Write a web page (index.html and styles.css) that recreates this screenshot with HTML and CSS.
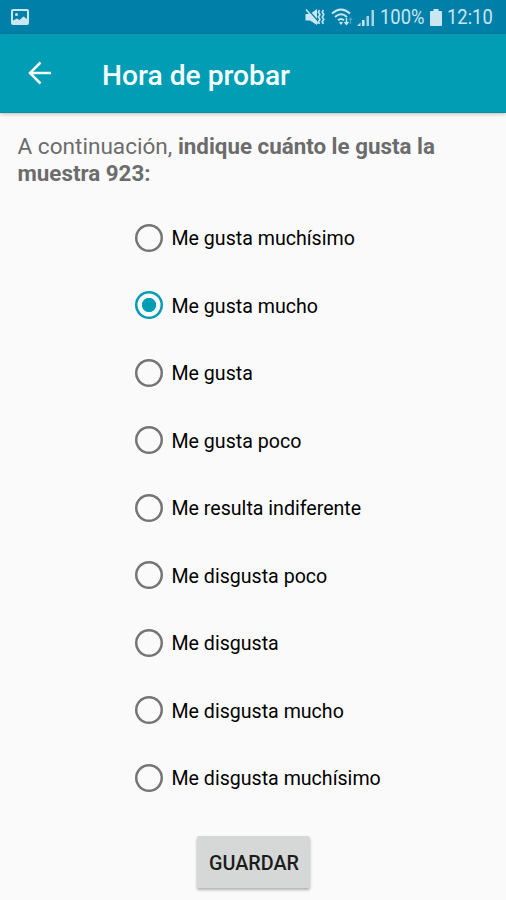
FILE: index.html
```html
<!DOCTYPE html>
<html lang="es">
<head>
  <meta charset="UTF-8"/>
  <meta name="viewport" content="width=device-width, initial-scale=1.0"/>
  <title>Hora de probar</title>
  <link rel="stylesheet" href="styles.css">
</head>
<body>
  <div class="status">
    <svg class="ic-foto" width="18" height="16" viewBox="0 0 18 16">
      <rect x="1" y="1" width="16" height="14" rx="1" fill="none" stroke="#c9e6f1" stroke-width="2"/>
      <circle cx="5.5" cy="5.5" r="1.5" fill="#c9e6f1"/>
      <path d="M2 14V11.500L6 9.500L8.500 11L12.500 7.500L16 10V14Z" fill="#c9e6f1"/>
    </svg>
    <svg class="ic-mute" width="20" height="18" viewBox="0 0 20 18">
      <path d="M0.500 6H5L12 1V17L5 12.500H0.500Z" fill="#c9e6f1"/>
      <path d="M2.500 1L13.500 13.500" stroke="#0080a8" stroke-width="1.300"/>
      <path d="M1 1.500L13 15.500" stroke="#c9e6f1" stroke-width="1.500"/>
      <path d="M14.500 2L13.400 4.300L15 6.600L13.400 9L15 11.400L13.400 13.700L14.500 16M18.300 2L17.200 4.300L18.800 6.600L17.200 9L18.800 11.400L17.200 13.700L18.300 16" fill="none" stroke="#c9e6f1" stroke-width="1.600"/>
    </svg>
    <svg class="ic-wifi" width="22" height="18" viewBox="0 0 22 18">
      <path d="M1 5.500Q10 -2.500 19 5.500M4 9Q10 3.500 16 9M7 12.300Q10 9.500 13 12.300" fill="none" stroke="#c9e6f1" stroke-width="1.900"/>
      <path d="M8 14.500Q10 12.800 12 14.500L10 17Z" fill="#c9e6f1"/>
      <path d="M15.500 10V16M13.500 14L15.500 16.500L17.500 14" fill="none" stroke="#c9e6f1" stroke-width="1.400"/>
      <path d="M19.500 16V10M18 12L19.500 10L21 12" fill="none" stroke="#4ba7c5" stroke-width="1.200"/>
    </svg>
    <svg class="ic-red" width="18" height="17" viewBox="0 0 18 17">
      <path d="M0 17L3.500 13.500V17ZM5 11H7.500V17H5Z" fill="#c9e6f1"/>
      <path d="M9.500 7H12V17H9.500ZM14.500 1H17V17H14.500Z" fill="#a9d4e5"/>
    </svg>
    <span class="cond bateria">100%</span>
    <svg class="ic-bat" width="12" height="17" viewBox="0 0 12 17">
      <path d="M3.500 0H8.500V2H11Q12 2 12 3V16Q12 17 11 17H1Q0 17 0 16V3Q0 2 1 2H3.500Z" fill="#c9e6f1"/>
    </svg>
    <span class="cond hora">12:10</span>
  </div>

  <header class="barra">
    <svg width="24" height="24" viewBox="0 0 24 24">
      <path d="M23 12H2M12.500 1.500L2 12L12.500 22.500" fill="none" stroke="#f5fdff" stroke-width="2.500"/>
    </svg>
    <h1>Hora de probar</h1>
  </header>

  <form class="contenido">
    <p class="consigna">A continuación, <b>indique cuánto le gusta la<br>muestra 923:</b></p>
    <div class="opciones">
      <label><input type="radio" name="gusto"><span>Me gusta muchísimo</span></label>
      <label><input type="radio" name="gusto" checked><span>Me gusta mucho</span></label>
      <label><input type="radio" name="gusto"><span>Me gusta</span></label>
      <label><input type="radio" name="gusto"><span>Me gusta poco</span></label>
      <label><input type="radio" name="gusto"><span>Me resulta indiferente</span></label>
      <label><input type="radio" name="gusto"><span>Me disgusta poco</span></label>
      <label><input type="radio" name="gusto"><span>Me disgusta</span></label>
      <label><input type="radio" name="gusto"><span>Me disgusta mucho</span></label>
      <label><input type="radio" name="gusto"><span>Me disgusta muchísimo</span></label>
    </div>
    <button type="button" class="guardar">GUARDAR</button>
  </form>
</body>
</html>
```

FILE: styles.css
```css
* { box-sizing:border-box; }
body { margin:0; height:900px; overflow:hidden; background:#fafafa; color:#000; font-family:Roboto,sans-serif; }
svg { display:block; flex:none; }

.status { height:34px; background:#0080a8; color:#c9e6f1; display:flex; align-items:center; padding:0 11px; }
.ic-mute { margin-left:auto; margin-right:6px; }
.ic-wifi { margin-right:4px; }
.ic-red { margin-right:5px; }
.cond { font-size:21px; line-height:34px; white-space:nowrap; transform-origin:0 50%; transform:scaleX(.875); }
.bateria { width:45px; margin-right:5px; }
.ic-bat { margin-right:5px; }
.hora { width:48px; }

.barra { height:79px; background:#009db5; display:flex; align-items:center; padding-left:28px; border-bottom:1px solid #078ea4; box-shadow:0 1px 4px rgba(0,0,0,.25); }
.barra h1 { margin:5px 0 0 50px; font-size:28.2px; font-weight:500; color:#f5fdff; line-height:32px; white-space:nowrap; }

.contenido { display:flex; flex-direction:column; }
.consigna { margin:20px 0 0 17.5px; font-size:22.6px; line-height:27px; color:#6c6c6c; white-space:nowrap; }
.consigna b { font-size:22.35px; font-weight:700; }

.opciones { margin:17px 0 0 134.5px; }
.opciones label { height:67.5px; display:flex; align-items:center; gap:9px; font-size:19.6px; white-space:nowrap; }
.opciones span { padding-top:2px; }
.opciones input { appearance:none; width:28px; height:28px; margin:0; flex:none; border-radius:50%; box-shadow:inset 0 0 0 2.5px #757575; }
.opciones input:checked { box-shadow:inset 0 0 0 2.5px #009db5; background:radial-gradient(circle,#009db5 6.700px,transparent 7.500px); }

.guardar { margin:24.5px 0 0 197px; width:113px; height:52px; padding:2px 0 0 1px; border:0; border-radius:2px; background:#d6d8d7; color:#1c1c1c; font:500 19.8px Roboto,sans-serif; box-shadow:0 2px 3px rgba(0,0,0,.3); }
```
